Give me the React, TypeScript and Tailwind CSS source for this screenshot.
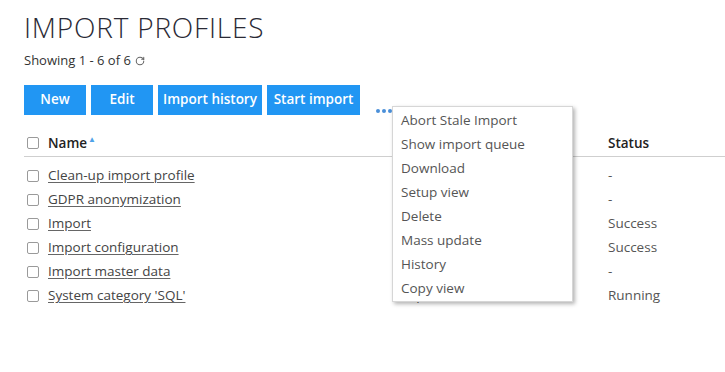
import { RotateCw } from 'lucide-react';

const rows = [
  { name: 'Clean-up import profile', type: '', status: '-' },
  { name: 'GDPR anonymization', type: '', status: '-' },
  { name: 'Import', type: '', status: 'Success' },
  { name: 'Import configuration', type: '', status: 'Success' },
  { name: 'Import master data', type: '', status: '-' },
  { name: "System category 'SQL'", type: 'Import', status: 'Running' },
];

const menuItems = [
  'Abort Stale Import',
  'Show import queue',
  'Download',
  'Setup view',
  'Delete',
  'Mass update',
  'History',
  'Copy view',
];

const buttons = [
  { label: 'New', w: 'w-[62px]' },
  { label: 'Edit', w: 'w-[62px]' },
  { label: 'Import history', w: 'w-[104px]' },
  { label: 'Start import', w: 'w-[93px]' },
];

function Box() {
  return <span className="inline-block w-[12px] h-[12px] border border-[#9a9a9a] rounded-[2px] bg-white shrink-0" />;
}

export default function App() {
  return (
    <div className="w-[725px] h-[372px] bg-white overflow-hidden font-['Open_Sans',sans-serif] text-[#333]">
      <div className="pl-6 pt-[10px]">
        <h1 className="text-[28px] leading-[34px] font-light tracking-[0.8px] text-[#2a2a35]">
          IMPORT PROFILES
        </h1>
        <div className="mt-[7px] flex items-center gap-1 text-[13px] text-[#333]">
          Showing 1 - 6 of 6
          <RotateCw className="w-[10px] h-[10px] text-[#666]" strokeWidth={2.5} />
        </div>

        <div className="relative mt-[14px] flex items-center gap-[5px]">
          {buttons.map((b) => (
            <button
              key={b.label}
              className={`h-[30px] bg-[#2196f3] text-white text-[13.5px] font-semibold ${b.w}`}
            >
              {b.label}
            </button>
          ))}
          <div className="ml-[11px] mt-[22px] flex gap-[2px]">
            <span className="w-[4px] h-[4px] rounded-full bg-[#4a8fd9]" />
            <span className="w-[4px] h-[4px] rounded-full bg-[#4a8fd9]" />
            <span className="w-[4px] h-[4px] rounded-full bg-[#4a8fd9]" />
          </div>

          <div className="absolute left-[368px] top-[21px] w-[181px] bg-white border border-[#d6d6d6] shadow-[2px_2px_4px_rgba(0,0,0,0.3)] py-[1px] z-10">
            {menuItems.map((m) => (
              <div key={m} className="h-[24px] leading-[24px] px-[8px] text-[13.5px] text-[#555]">
                {m}
              </div>
            ))}
          </div>
        </div>

        <div className="mt-[16px]">
          <div className="flex items-center h-[26px] border-b border-[#cfcfcf] text-[13.5px] font-semibold text-[#222]">
            <div className="w-[376px] flex items-center gap-[9px] pl-[3px]">
              <Box />
              <span className="flex items-start">
                Name
                <span className="text-[#4fa3e8] text-[8px] leading-none ml-[1px] mt-[2px]">▲</span>
              </span>
            </div>
            <div className="w-[208px]" />
            <div>Status</div>
          </div>
          <div className="pt-[7px]">
            {rows.map((r) => (
              <div key={r.name} className="flex items-center h-[24px] text-[13.5px] text-[#444]">
                <div className="w-[376px] flex items-center gap-[9px] pl-[3px]">
                  <Box />
                  <span className="underline underline-offset-2 decoration-[#666]">{r.name}</span>
                </div>
                <div className="w-[208px] text-[#555]">{r.type}</div>
                <div className="text-[#555]">{r.status}</div>
              </div>
            ))}
          </div>
        </div>
      </div>
    </div>
  );
}
